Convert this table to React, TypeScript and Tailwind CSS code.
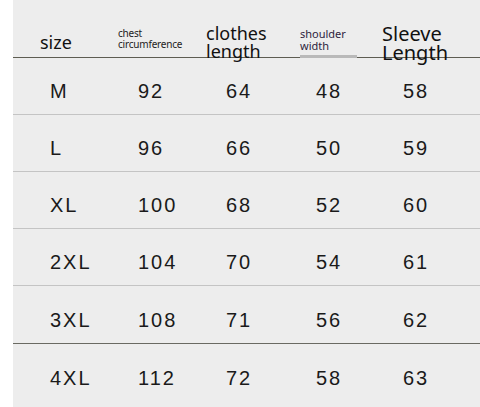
import React from "react";

const rows = [
  ["M", "92", "64", "48", "58"],
  ["L", "96", "66", "50", "59"],
  ["XL", "100", "68", "52", "60"],
  ["2XL", "104", "70", "54", "61"],
  ["3XL", "108", "71", "56", "62"],
  ["4XL", "112", "72", "58", "63"],
];

export default function App() {
  return (
    <div className="w-[480px] h-[407px] flex bg-white overflow-hidden">
      <div className="w-[13px] shrink-0 bg-white" />
      <div className="flex-1 bg-[#ededed] flex flex-col">
        {/* header */}
        <div className="h-[58px] shrink-0 relative border-b border-[#5e5d52] grid grid-cols-[78px_88px_94px_82px_1fr] pl-[27px] text-[#111] font-['Noto_Sans',sans-serif]">
          <div className="flex items-end pb-[6px] text-[18px] leading-none">size</div>
          <div className="flex flex-col justify-end pb-[7px] text-[10px] leading-[11px] text-[#222] tracking-[-0.2px]">
            <span>chest</span>
            <span>circumference</span>
          </div>
          <div className="flex flex-col justify-end text-[18px] leading-[18px] -mb-[3px]">
            <span>clothes</span>
            <span>length</span>
          </div>
          <div className="flex flex-col justify-end pb-[5px] text-[11px] leading-[12px] text-[#2e2440]">
            <span>shoulder</span>
            <span>width</span>
          </div>
          <div className="flex flex-col justify-end text-[20px] leading-[19px] -mb-[5px]">
            <span>Sleeve</span>
            <span>Length</span>
          </div>
          <div className="absolute left-[287px] bottom-[-1px] w-[57px] h-[3px] bg-[#b9b9b9]" />
        </div>
        {/* body */}
        {rows.map((r, i) => (
          <div
            key={r[0]}
            className={`shrink-0 grid grid-cols-[88px_88px_90px_87px_1fr] pl-[37px] items-center text-[20px] tracking-[2px] text-[#1a1a1a] font-['Liberation_Sans',Arial,sans-serif] ${
              i === 5
                ? "flex-1 pt-[4px]"
                : i === 4
                ? "h-[58px] pt-[10px] border-b border-[#6a6a62]"
                : "h-[57px] pt-[10px] border-b border-[#c4c4c4]"
            }`}
          >
            {r.map((c, j) => (
              <span key={j}>{c}</span>
            ))}
          </div>
        ))}
      </div>
    </div>
  );
}
